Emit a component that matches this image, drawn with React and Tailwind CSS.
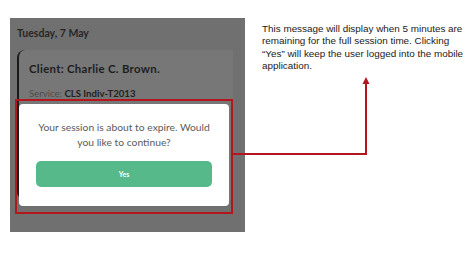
export default function App() {
  return (
    <div className="relative w-[474px] h-[253px] bg-white overflow-hidden flex items-start" style={{ fontFamily: "Lato, 'Liberation Sans', sans-serif" }}>
      {/* dimmed phone screenshot */}
      <div className="relative ml-[10px] mt-[18px] w-[235px] h-[214px] bg-[#707070] shrink-0">
        <p className="pl-[7px] pt-[8px] text-[10.5px] font-bold text-[#262626] leading-[14px]">
          Tuesday, 7 May
        </p>
        <div className="ml-[7px] mt-[10px] w-[216px] h-[150px] bg-[#777777] rounded-l-[8px] border-l-2 border-[#1a1a1a] pl-[10px] pt-[12px]">
          <p className="text-[11.4px] font-bold text-[#1e1e1e] leading-[14px] tracking-[0.3px]">
            Client: Charlie C. Brown.
          </p>
          <p className="mt-[12px] text-[9.6px] leading-[12px] text-[#4d4d4d]">
            Service: <span className="font-bold text-[#222]">CLS Indiv-T2013</span>
          </p>
        </div>

        {/* highlighted dialog */}
        <div className="absolute left-[5px] top-[81px] w-[218px] h-[115px] border-2 border-[#b3161c] pt-[3px] pl-[2px] pr-[2px] pb-[6px] flex">
          <div className="flex-1 bg-white rounded-[4px] flex flex-col items-center px-[17px] pt-[16px]">
            <p className="text-center whitespace-nowrap text-[10.3px] leading-[15px] text-[#5a5a5a]">
              Your session is about to expire. Would
              <br />
              you like to continue?
            </p>
            <button className="mt-[11px] w-full h-[26px] rounded-[5px] bg-[#55b98a] text-white text-[7px] font-bold flex items-center justify-center">
              Yes
            </button>
          </div>
        </div>
      </div>

      {/* note */}
      <p className="ml-[17px] mt-[23px] text-[9.9px] leading-[12.4px] text-[#1a1a1a]" style={{ fontFamily: "'Liberation Sans', Arial, sans-serif" }}>
        This message will display when 5 minutes are
        <br />
        remaining for the full session time. Clicking
        <br />
        “Yes” will keep the user logged into the mobile
        <br />
        application.
      </p>

      {/* connector arrow */}
      <svg className="absolute left-0 top-0 pointer-events-none" width="474" height="253" viewBox="0 0 474 253">
        <polyline points="233,154 366,154 366,82" fill="none" stroke="#b3161c" strokeWidth="2" />
        <polygon points="366,77 362.5,84 369.5,84" fill="#b3161c" />
      </svg>
    </div>
  );
}
